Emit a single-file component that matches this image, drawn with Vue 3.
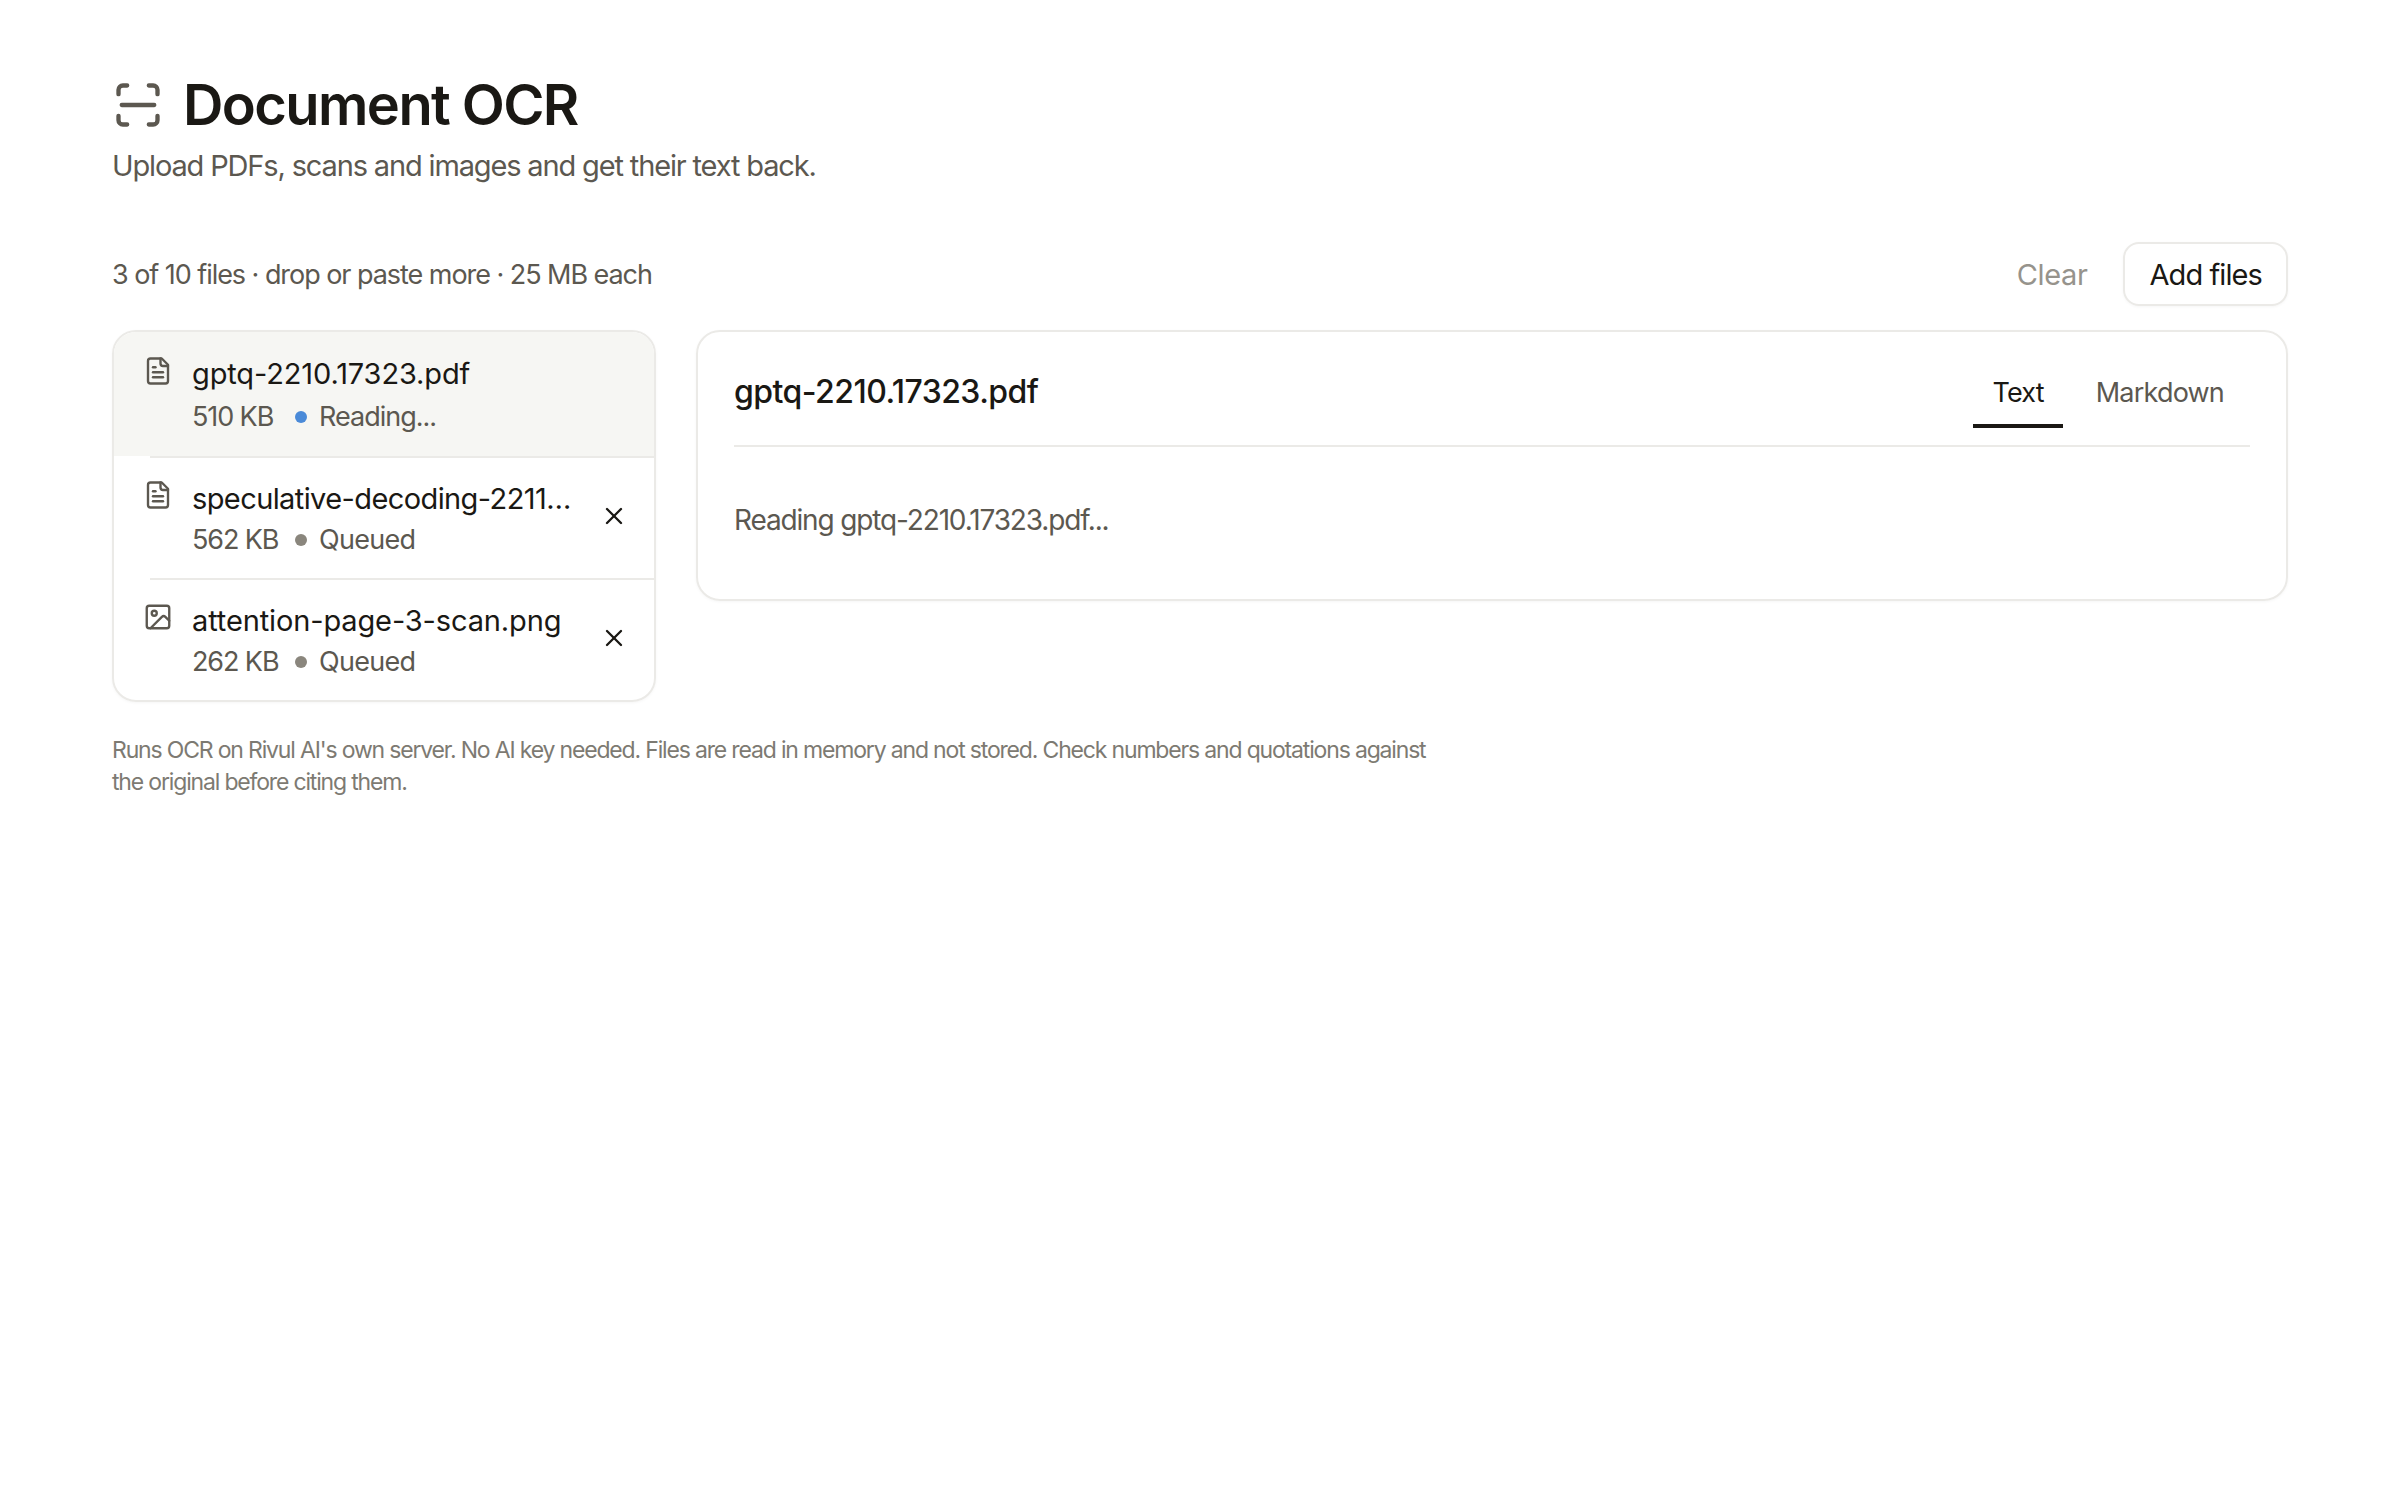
<template>
  <div class="page">
    <header class="head">
      <div class="title-row">
        <svg class="scan-icon" viewBox="0 0 24 24" fill="none" stroke="currentColor" stroke-width="2" stroke-linecap="round" stroke-linejoin="round">
          <path d="M3 7V5a2 2 0 0 1 2-2h2" />
          <path d="M17 3h2a2 2 0 0 1 2 2v2" />
          <path d="M21 17v2a2 2 0 0 1-2 2h-2" />
          <path d="M7 21H5a2 2 0 0 1-2-2v-2" />
          <path d="M4.5 12h15" />
        </svg>
        <h1>Document OCR</h1>
      </div>
      <p class="sub">Upload PDFs, scans and images and get their text back.</p>
    </header>

    <div class="toolbar">
      <span class="count">3 of 10 files · drop or paste more · 25 MB each</span>
      <div class="actions">
        <button class="btn-clear">Clear</button>
        <button class="btn-add">Add files</button>
      </div>
    </div>

    <div class="main">
      <div class="file-list">
        <template v-for="(f, i) in files" :key="f.name">
          <div v-if="i > 0" class="sep"></div>
          <div class="file-row" :class="{ active: f.active }">
            <svg class="file-icon" viewBox="0 0 24 24" fill="none" stroke="currentColor" stroke-width="1.9" stroke-linecap="round" stroke-linejoin="round">
              <template v-if="f.type === 'doc'">
                <path d="M15 2H6a2 2 0 0 0-2 2v16a2 2 0 0 0 2 2h12a2 2 0 0 0 2-2V7Z" />
                <path d="M14 2v4a2 2 0 0 0 2 2h4" />
                <path d="M16 13H8" />
                <path d="M16 17H8" />
                <path d="M10 9H8" />
              </template>
              <template v-else>
                <rect x="3" y="3" width="18" height="18" rx="2" />
                <circle cx="9" cy="9" r="2" />
                <path d="m21 15-3.1-3.1a2 2 0 0 0-2.8 0L6 21" />
              </template>
            </svg>
            <div class="file-info">
              <div class="file-name" :class="{ tight: f.tight }">{{ f.name }}</div>
              <div class="file-meta">
                <span class="file-size">{{ f.size }}</span>
                <i class="dot" :class="{ blue: f.active }"></i>
                <span class="file-status">{{ f.status }}</span>
              </div>
            </div>
            <button v-if="!f.active" class="remove">
              <svg viewBox="0 0 24 24" fill="none" stroke="currentColor" stroke-width="2" stroke-linecap="round">
                <path d="M18 6 6 18" />
                <path d="m6 6 12 12" />
              </svg>
            </button>
          </div>
        </template>
      </div>

      <section class="detail">
        <div class="detail-head">
          <h2>gptq-2210.17323.pdf</h2>
          <div class="tabs">
            <button class="tab on">Text</button>
            <button class="tab">Markdown</button>
          </div>
        </div>
        <p class="detail-body">Reading gptq-2210.17323.pdf...</p>
      </section>
    </div>

    <p class="note">Runs OCR on Rivul AI's own server. No AI key needed. Files are read in memory and not stored. Check numbers and quotations against the original before citing them.</p>
  </div>
</template>

<script setup>
const files = [
  { name: 'gptq-2210.17323.pdf', size: '510 KB', status: 'Reading...', type: 'doc', active: true },
  { name: 'speculative-decoding-2211…', size: '562 KB', status: 'Queued', type: 'doc', tight: true },
  { name: 'attention-page-3-scan.png', size: '262 KB', status: 'Queued', type: 'img' }
]
</script>

<style scoped>
.page {
  box-sizing: border-box;
  width: 2400px;
  min-height: 1500px;
  padding: 70px 112px 0 112px;
  background: #fff;
  color: #1a1814;
  font-family: Inter, "Liberation Sans", sans-serif;
}

.title-row {
  display: flex;
  align-items: center;
  gap: 19px;
}

.scan-icon {
  width: 52px;
  height: 52px;
  color: #5c5850;
  flex: none;
}

h1 {
  margin: 0;
  font-size: 56px;
  line-height: 70px;
  font-weight: 600;
  letter-spacing: -1.6px;
}

.sub {
  margin: 6px 0 0;
  font-size: 29px;
  line-height: 40px;
  letter-spacing: -1.15px;
  color: #5c5850;
}

.toolbar {
  display: flex;
  justify-content: space-between;
  align-items: center;
  margin-top: 56px;
}

.count {
  font-size: 27px;
  letter-spacing: -1.05px;
  color: #5c5850;
}

.actions {
  display: flex;
  align-items: center;
  gap: 36px;
}

button {
  font-family: inherit;
  background: none;
  border: none;
  padding: 0;
}

.btn-clear {
  font-size: 29px;
  letter-spacing: -0.4px;
  color: #96938c;
}

.btn-add {
  height: 64px;
  padding: 0 24px;
  border: 2px solid #ebeae7;
  border-radius: 16px;
  box-shadow: 0 1px 3px rgba(26, 24, 20, 0.04);
  font-size: 29px;
  letter-spacing: -0.9px;
  color: #1a1814;
}

.main {
  display: flex;
  align-items: flex-start;
  gap: 40px;
  margin-top: 24px;
}

.file-list {
  box-sizing: border-box;
  width: 544px;
  flex: none;
  border: 2px solid #ebeae7;
  border-radius: 24px;
  box-shadow: 0 1px 3px rgba(26, 24, 20, 0.04);
  overflow: hidden;
}

.file-row {
  box-sizing: border-box;
  display: flex;
  align-items: flex-start;
  height: 120px;
  padding: 21px 26px 0 29px;
}

.file-row.active {
  height: 124px;
  padding-top: 22px;
  background: #f6f6f3;
}

.sep {
  height: 2px;
  margin-left: 36px;
  background: #ebeae7;
}

.file-icon {
  width: 30px;
  height: 30px;
  color: #5c5850;
  flex: none;
  margin-top: 1px;
}

.active .file-icon {
  margin-top: 2px;
}

.file-info {
  flex: 1;
  min-width: 0;
  margin-left: 19px;
}

.file-name {
  font-size: 29px;
  line-height: 40px;
  letter-spacing: -0.13px;
  white-space: nowrap;
}

.file-name.tight {
  letter-spacing: -0.6px;
}

.file-meta {
  display: flex;
  align-items: center;
  margin-top: 2px;
  font-size: 27px;
  line-height: 38px;
  color: #5c5850;
}

.active .file-meta {
  margin-top: 4px;
}

.file-size {
  width: 83px;
  letter-spacing: -1.1px;
  white-space: nowrap;
}

.file-status {
  letter-spacing: -0.7px;
}

.active .file-status {
  letter-spacing: -1px;
}

.dot {
  width: 12px;
  height: 12px;
  border-radius: 50%;
  background: #8a867d;
  margin: 0 12px 0 20px;
}

.dot.blue {
  background: #4a8ad8;
}

.remove {
  width: 28px;
  height: 28px;
  margin: 23px 0 0 0;
  color: #1a1814;
  flex: none;
}

.remove svg {
  width: 28px;
  height: 28px;
  display: block;
}

.detail {
  flex: 1;
  box-sizing: border-box;
  height: 271px;
  padding: 0 36px;
  border: 2px solid #ebeae7;
  border-radius: 24px;
  box-shadow: 0 1px 3px rgba(26, 24, 20, 0.04);
}

.detail-head {
  display: flex;
  justify-content: space-between;
  align-items: center;
  height: 113px;
  border-bottom: 2px solid #ebeae7;
}

h2 {
  margin: 6px 0 0;
  font-size: 32px;
  font-weight: 500;
  letter-spacing: -0.55px;
}

.tabs {
  display: flex;
  align-self: flex-end;
  margin-right: 7px;
  gap: 14px;
}

.tab {
  height: 78px;
  padding: 10px 19px 0;
  margin-bottom: 17px;
  font-size: 27px;
  letter-spacing: -0.8px;
  color: #5c5850;
  border-bottom: 4px solid transparent;
}

.tab.on {
  color: #1a1814;
  border-bottom-color: #1a1814;
}

.detail-body {
  margin: 53px 0 0;
  font-size: 28px;
  line-height: 40px;
  letter-spacing: -1.15px;
  color: #5c5850;
}

.note {
  width: 1340px;
  margin: 32px 0 0;
  font-size: 23px;
  line-height: 32px;
  letter-spacing: -1.17px;
  color: #7d7a72;
}
</style>
